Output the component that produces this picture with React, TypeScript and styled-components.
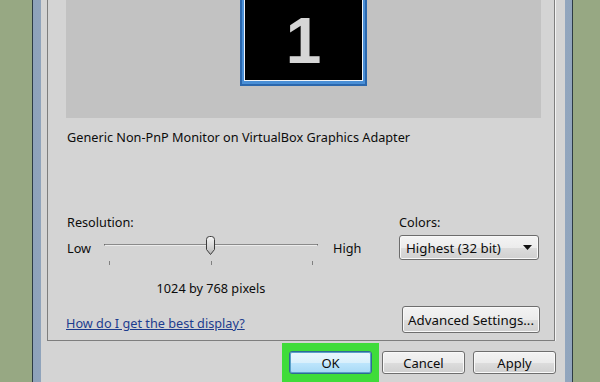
import React from 'react';
import styled, { createGlobalStyle } from 'styled-components';

const GlobalStyle = createGlobalStyle`
  html, body {
    margin: 0;
    padding: 0;
    background: #97a883;
    overflow: hidden;
  }
`;

function Thumb() {
  return (
    <svg width='11' height='20' viewBox='0 0 11 20'>
      <defs>
        <linearGradient id='thumbFill' x1='0' y1='0' x2='0' y2='1'>
          <stop offset='0' stopColor='#f6f6f6' />
          <stop offset='0.55' stopColor='#d6d6d6' />
          <stop offset='1' stopColor='#b4b4b4' />
        </linearGradient>
      </defs>
      <path
        d='M1.5 3.5 Q1.5 0.5 4.5 0.5 H6.5 Q9.5 0.5 9.5 3.5 V13.5 L5.5 18.5 L1.5 13.5 Z'
        fill='url(#thumbFill)'
        stroke='#3c3c3c'
        strokeWidth='1'
      />
    </svg>
  );
}

function Arrow() {
  return (
    <svg width='9' height='5' viewBox='0 0 9 5'>
      <path d='M0 0 H9 L4.5 5 Z' fill='#111' />
    </svg>
  );
}

function App() {
  const position = 50;

  return (
    <Page>
      <GlobalStyle />
      <Frame>
        <Client>
          <Panel>
            <Preview>
              <Monitor>
                <Screen>1</Screen>
              </Monitor>
            </Preview>
            <Caption>Generic Non-PnP Monitor on VirtualBox Graphics Adapter</Caption>
            <Settings>
              <ResolutionGrid>
                <Label $span>Resolution:</Label>
                <EndText>Low</EndText>
                <Track>
                  <TrackLine />
                  <ThumbHolder style={{ left: `${position}%` }}>
                    <Thumb />
                  </ThumbHolder>
                </Track>
                <EndText $high>High</EndText>
                <span />
                <Ticks>
                  <Tick />
                  <Tick />
                  <Tick />
                </Ticks>
                <span />
                <span />
                <PixelText>1024 by 768 pixels</PixelText>
              </ResolutionGrid>
              <ColorsColumn>
                <Label>Colors:</Label>
                <Select>
                  <span>Highest (32 bit)</span>
                  <Arrow />
                </Select>
              </ColorsColumn>
            </Settings>
            <BottomRow>
              <HelpLink href='#'>How do I get the best display?</HelpLink>
              <AdvancedButton>Advanced Settings...</AdvancedButton>
            </BottomRow>
          </Panel>
          <Footer>
            <Highlight>
              <DialogButton $primary>OK</DialogButton>
            </Highlight>
            <DialogButton $gap={3}>Cancel</DialogButton>
            <DialogButton $gap={8}>Apply</DialogButton>
          </Footer>
        </Client>
      </Frame>
    </Page>
  );
}
export default App;

const Page = styled.div`
  display: flex;
  width: 600px;
  height: 382px;
  overflow: hidden;
  background: #97a883;
  font-family: 'Noto Sans', 'Open Sans', sans-serif;
  font-size: 12.7px;
  color: #0c0c0c;
`;

const Frame = styled.div`
  box-sizing: border-box;
  margin-left: 32px;
  width: 541px;
  height: 100%;
  padding: 0 7px 0 8px;
  background: linear-gradient(90deg, #8ea2ba 0%, #aebfd3 40%, #b4c4d7 60%, #91a5bd 100%);
  border-left: 1px solid #2d3b44;
  border-right: 1px solid #2d3b44;
`;

const Client = styled.div`
  box-sizing: border-box;
  height: 100%;
  padding: 0 10px 0 6px;
  background: #d4d4d4;
  display: flex;
  flex-direction: column;
`;

const Panel = styled.div`
  box-sizing: border-box;
  height: 343px;
  display: flex;
  flex-direction: column;
  border: 1px solid #7e7e7e;
  border-top: none;
  box-shadow: 1px 0 0 #f2f2f2;
`;

const Preview = styled.div`
  height: 118px;
  margin: 0 13px 0 18px;
  background: #c2c2c2;
  display: flex;
  justify-content: center;
`;

const Monitor = styled.div`
  box-sizing: border-box;
  width: 127px;
  height: 86px;
  padding: 0 2px 3px;
  background: #4a8fd6;
  border: 2px solid #2a67ad;
  border-top: none;
`;

const Screen = styled.div`
  box-sizing: border-box;
  height: 100%;
  background: #000;
  border: 1px solid #eef3f8;
  border-top: none;
  display: flex;
  align-items: center;
  justify-content: center;
  padding-top: 2px;
  font-family: 'Liberation Sans', Arial, sans-serif;
  font-weight: bold;
  font-size: 64px;
  color: #d6d6d6;
`;

const Caption = styled.div`
  margin-top: 10px;
  padding-left: 19px;
  line-height: 18px;
`;

const Settings = styled.div`
  display: flex;
  margin-top: 67px;
  padding-left: 19px;
  gap: 36px;
`;

const ResolutionGrid = styled.div`
  display: grid;
  grid-template-columns: 37px 214px 45px;
  grid-template-rows: 22px 25px 10px auto;
`;

const Label = styled.div<{ $span?: boolean }>`
  line-height: 18px;
  grid-column: ${(props) => (props.$span ? '1 / -1' : 'auto')};
  height: 22px;
`;

const EndText = styled.div<{ $high?: boolean }>`
  display: flex;
  align-items: center;
  padding-left: ${(props) => (props.$high ? '15px' : '0')};
`;

const Track = styled.div`
  position: relative;
`;

const TrackLine = styled.div`
  margin-top: 9px;
  height: 1px;
  background: #8a8a8a;
  border-bottom: 1px solid #ececec;
  border-left: 1px solid #6a6a6a;
  border-right: 1px solid #6a6a6a;
`;

const ThumbHolder = styled.div`
  position: absolute;
  top: 1px;
  transform: translateX(-6px);
  line-height: 0;
`;

const Ticks = styled.div`
  display: flex;
  justify-content: space-between;
  padding: 1px 5px 0;
`;

const Tick = styled.div`
  width: 1px;
  height: 4px;
  background: #808080;
`;

const PixelText = styled.div`
  margin-top: 9px;
  line-height: 18px;
  text-align: center;
`;

const ColorsColumn = styled.div`
  display: flex;
  flex-direction: column;
  width: 140px;
`;

const Select = styled.div`
  box-sizing: border-box;
  height: 25px;
  display: flex;
  align-items: center;
  justify-content: space-between;
  padding: 0 6px 0 6px;
  border: 1px solid #6c6c6c;
  border-radius: 3px;
  background: linear-gradient(#f4f4f4 0%, #ececec 50%, #dcdcdc 51%, #d0d0d0 100%);
  box-shadow: inset 0 0 0 1px #f8f8f8;
  font-size: 13.3px;
`;

const BottomRow = styled.div`
  margin-top: auto;
  display: flex;
  align-items: flex-end;
  justify-content: space-between;
  padding: 0 14px 7px 18px;
`;

const HelpLink = styled.a`
  line-height: 18px;
  margin-bottom: 1px;
  color: #1d3c8e;
  text-decoration: underline;
`;

const buttonFace = `
  box-sizing: border-box;
  border: 1px solid #6e6e6e;
  border-radius: 3px;
  box-shadow: inset 0 0 0 1px #f9f9f9;
  font-family: 'Noto Sans', 'Open Sans', sans-serif;
  font-size: 13px;
  color: #0c0c0c;
  padding: 0;
`;

const AdvancedButton = styled.button`
  ${buttonFace}
  width: 138px;
  height: 27px;
  font-size: 13.3px;
  background: linear-gradient(#f3f3f3 0%, #ebebeb 50%, #dddddd 51%, #cfcfcf 100%);
`;

const Footer = styled.div`
  display: flex;
  justify-content: flex-end;
  align-items: flex-start;
  margin-top: 2px;
  margin-right: -1px;
`;

const Highlight = styled.div`
  padding: 8px 7px 8px;
  background: #3fdc3a;
`;

const DialogButton = styled.button<{ $primary?: boolean; $gap?: number }>`
  ${buttonFace}
  width: 83px;
  height: 23px;
  margin-left: ${(props) => props.$gap || 0}px;
  margin-top: ${(props) => (props.$primary ? '0' : '8px')};
  border-color: ${(props) => (props.$primary ? '#2f6a96' : '#6e6e6e')};
  background: ${(props) =>
    props.$primary
      ? 'linear-gradient(#eaf6fd 0%, #d9f0fc 50%, #bee6fd 51%, #a7d9f5 100%)'
      : 'linear-gradient(#f3f3f3 0%, #ebebeb 50%, #dddddd 51%, #cfcfcf 100%)'};
  box-shadow: ${(props) =>
    props.$primary ? 'inset 0 0 0 1px #5aa0c8' : 'inset 0 0 0 1px #f9f9f9'};
`;
